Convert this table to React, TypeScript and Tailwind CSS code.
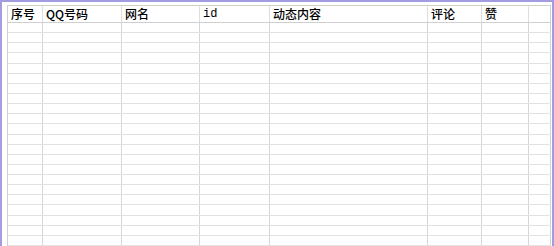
import React from "react";

const cols = [
  { w: "w-[35px]", label: "序号" },
  { w: "w-[79px]", label: "QQ号码" },
  { w: "w-[78px]", label: "网名" },
  { w: "w-[70px]", label: "id" },
  { w: "w-[158px]", label: "动态内容" },
  { w: "w-[54px]", label: "评论" },
  { w: "w-[47px]", label: "赞" },
  { w: "w-[22px]", label: "" },
];

const rowH = [
  "h-[10px]", "h-[10px]", "h-[10px]", "h-[11px]", "h-[10px]", "h-[10px]", "h-[10px]", "h-[10px]",
  "h-[10px]", "h-[10px]", "h-[11px]", "h-[10px]", "h-[10px]", "h-[10px]", "h-[10px]", "h-[10px]",
  "h-[10px]", "h-[10px]", "h-[11px]", "h-[10px]", "h-[10px]", "h-[10px]", "h-[10px]",
];

export default function App() {
  return (
    <div className="w-[554px] h-[246px] overflow-hidden bg-white border-t-2 border-l-2 border-r-2 border-[#a49ce0] pt-[3px] pl-[5px] pr-[1px] flex flex-col">
      <div className="w-[544px] border-t border-l border-[#cfcfcf] flex flex-col flex-1 overflow-hidden">
        <div className="flex h-[17px] border-b border-[#cfcfcf] shrink-0 bg-white">
          {cols.map((c, i) => (
            <div
              key={i}
              className={`${c.w} shrink-0 border-r ${i === cols.length - 1 ? "border-[#cfcfcf]" : "border-[#dedede]"} pl-[3px] text-[12px] leading-[16px] text-black font-[500]`}
              style={{ fontFamily: i === 3 ? '"Liberation Mono", "DejaVu Sans Mono", monospace' : '"Noto Sans CJK SC", "Noto Sans", sans-serif' }}
            >
              {c.label}
            </div>
          ))}
        </div>
        {rowH.map((h, r) => (
          <div key={r} className={`flex ${h} shrink-0 border-b border-[#e2e2e2]`}>
            {cols.map((c, i) => (
              <div key={i} className={`${c.w} shrink-0 border-r ${i === cols.length - 1 ? "border-[#cfcfcf]" : "border-[#d6d6d6]"}`} />
            ))}
          </div>
        ))}
      </div>
    </div>
  );
}
